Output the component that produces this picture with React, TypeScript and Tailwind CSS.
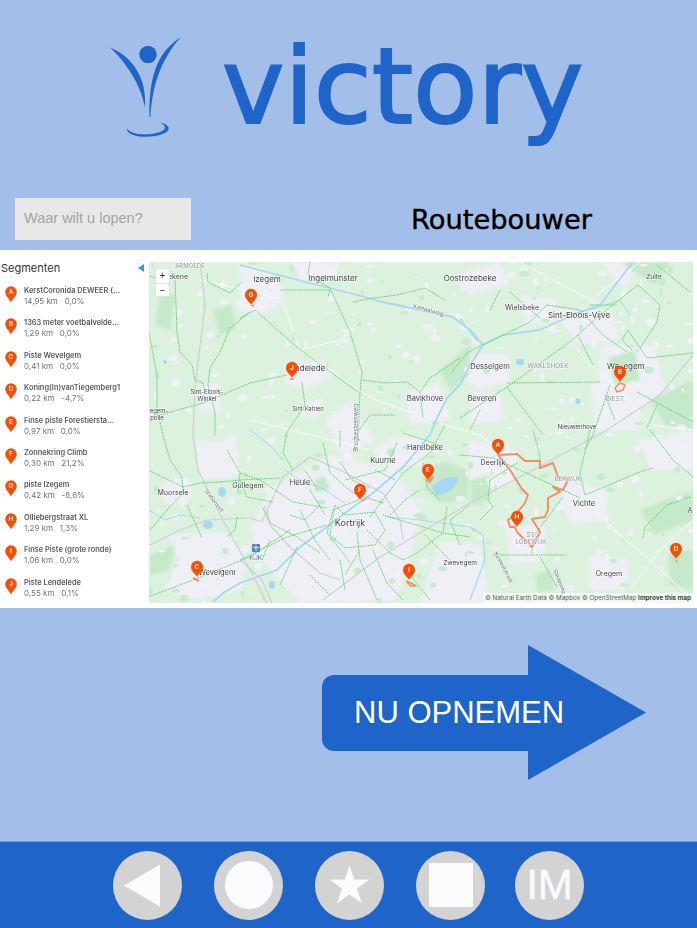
const SEGMENTS = [
  ["A", "KerstCoronida DEWEER (...", "14,95 km", "0,0%"],
  ["B", "1363 meter voetbalvelde...", "1,29 km", "0,0%"],
  ["C", "Piste Wevelgem", "0,41 km", "0,0%"],
  ["D", "Koning(In)vanTiegemberg1", "0,22 km", "-4,7%"],
  ["E", "Finse piste Forestiersta...", "0,97 km", "0,0%"],
  ["F", "Zonnekring Climb", "0,30 km", "21,2%"],
  ["G", "piste Izegem", "0,42 km", "-8,6%"],
  ["H", "Olliebergstraat XL", "1,29 km", "1,3%"],
  ["I", "Finse Piste (grote ronde)", "1,06 km", "0,0%"],
  ["J", "Piste Lendelede", "0,55 km", "0,1%"],
];

const URBAN = [
  "240,265 262,268 285,290 280,305 262,315 240,312",
  "285,362 325,360 330,378 305,388 285,382",
  "305,400 320,402 318,418 302,416",
  "198,385 218,385 222,410 200,412",
  "165,480 190,478 192,500 170,505 160,495",
  "168,535 225,532 248,560 240,590 195,600 165,590 178,560",
  "195,440 235,442 240,475 200,480",
  "270,490 330,455 395,470 420,510 410,560 395,600 300,603 262,560 250,530",
  "325,420 350,400 375,440 340,455",
  "375,445 400,435 430,440 420,465 385,470",
  "405,392 440,385 450,420 410,425",
  "470,355 510,355 510,382 480,390 460,378",
  "470,390 500,395 505,420 470,425",
  "470,440 510,448 515,480 490,490 465,475",
  "520,295 555,300 560,320 525,325",
  "550,308 610,310 620,340 580,345",
  "600,345 655,345 665,395 625,415 598,395",
  "555,480 610,490 605,520 570,525",
  "505,525 545,525 545,560 510,565",
  "590,380 640,400 640,430 595,430",
  "455,275 500,262 510,285 465,295",
  "590,555 630,560 625,590 590,590",
  "440,540 480,545 490,603 420,603",
  "640,440 693,430 693,470 650,470",
  "600,262 640,262 625,290",
  "293,262 340,262 335,278 300,280",
  "210,445 235,435 238,470 212,478",
];

const FOREST = [
  "425,468 445,462 468,470 468,500 440,503 425,490",
  "440,370 470,345 470,375 450,390",
  "213,310 232,305 235,330 220,335",
  "640,510 693,490 693,520 655,535",
  "668,555 693,550 693,590 670,585",
  "608,358 635,350 640,380 615,385",
  "535,575 550,570 555,590 538,592",
  "470,480 490,475 490,500 472,505",
  "160,290 175,295 170,330 155,325",
  "620,262 670,262 655,285",
  "650,400 693,380 693,430 665,425",
  "315,480 325,475 330,490 315,492",
  "150,555 175,545 170,570 150,575",
];

const WATER = [
  { w: 1.8, p: "240,265 290,278 357,295 387,303 453,317 470,330 483,345 503,335 540,330 577,313 600,305 633,262" },
  { w: 1.8, p: "483,345 470,365 460,385 447,398 436,420 430,435 403,467 373,493 353,507 327,527 300,547 277,570 240,583 223,593 213,602" },
  { w: 1.2, p: "387,517 420,520 470,527 483,535 485,560 470,600" },
  { w: 1.2, p: "460,318 470,332 478,342" },
  { w: 1, p: "577,313 600,307 620,300 630,315" },
  { w: 1, p: "285,470 300,480 320,487 345,503" },
  { w: 1, p: "149,510 165,520 180,515 200,518" },
  { w: 1, p: "250,430 270,445 283,460" },
];

const GREY = [
  "200,262 205,305 195,388 193,435 198,470 223,520 250,570 267,603",
  "150,545 180,530 207,520 250,518 262,522",
  "323,600 380,557 470,503 537,468 607,430 660,395 693,355",
  "262,522 267,510 283,477 310,457 340,470 383,493 400,520 403,540",
  "267,510 270,525 290,547 320,573 340,580",
  "240,560 262,580 272,603",
];

const WHITE = [
  "200,280 245,290 282,300 300,350 362,392 380,402 420,415 445,425 480,435 505,455",
  "300,350 340,340 360,320",
  "570,340 590,365 620,390 650,425 693,430",
  "590,505 620,535 650,560 693,600",
  "520,262 590,300 640,262",
  "250,420 330,440 370,450",
  "630,590 660,550 693,520",
];

const GREEN = [
  "148,275 155,278",
  "175,278 177,332 180,352 192,365 195,380 203,383 205,392",
  "207,273 208,282 230,293 242,282",
  "250,312 230,328 220,352 210,368 208,385 215,412 215,435",
  "148,328 157,375 157,412 160,422 163,435 170,460 182,477 183,493",
  "160,415 203,403 250,383 287,375",
  "148,470 183,487 200,483 220,482 240,480 280,478",
  "227,450 240,473 238,493",
  "187,505 202,538",
  "150,530 167,510 183,493",
  "237,517 235,530 227,537",
  "148,597 193,580 250,557 290,530",
  "310,262 308,275 330,288 350,332 362,372 360,392 358,440",
  "280,290 330,290 328,297",
  "240,318 255,310 298,348 358,392",
  "302,382 305,405 287,432 283,453 293,470",
  "353,302 373,298 397,295 425,288 445,300",
  "363,380 383,383 407,382 420,392 423,418",
  "460,358 430,378 420,392",
  "395,415 370,415 352,440",
  "460,418 507,387 570,342 600,315 638,285 660,305 657,322 640,348 647,358 693,353",
  "507,387 543,435",
  "507,383 600,382",
  "547,305 530,322 468,352 452,372",
  "547,305 580,310 603,335 627,352",
  "590,305 617,305",
  "578,335 593,365",
  "657,265 690,292",
  "610,385 593,435 585,450",
  "637,392 693,422",
  "510,292 540,318",
  "500,290 490,310",
  "657,405 647,428",
  "358,500 333,510 327,533 343,553 350,563",
  "357,533 360,560 377,600",
  "370,517 403,473 430,453 445,425",
  "423,463 427,487 440,500",
  "447,507 443,533",
  "383,515 443,533 470,537",
  "367,530 390,553 403,560 417,553 443,533",
  "373,550 387,583 403,600",
  "323,443 330,473 353,493 383,503",
  "340,447 340,430",
  "240,473 260,480 293,502 327,508",
  "240,480 247,497 273,502",
  "263,508 270,523 297,537 320,553",
  "240,560 287,537 327,525",
  "297,547 290,563 280,585",
  "397,443 385,470 345,480",
  "403,433 440,445",
  "460,455 493,458 520,470 580,498",
  "533,430 540,457 540,470",
  "590,430 580,473 585,495 640,472 653,468",
  "650,430 673,460 693,477",
  "490,480 488,500 493,507 480,520",
  "517,463 490,480",
  "563,497 533,537 532,553",
  "493,555 567,555",
  "540,557 557,587",
  "690,497 667,505 645,527 643,538",
  "470,505 450,520 460,545",
  "340,560 345,590",
  "310,575 330,595",
  "300,510 315,540 330,560",
  "410,575 430,600",
  "425,535 450,560",
  "335,505 345,515 375,512 385,530 375,545 345,548 330,535 335,505",
  "320,505 305,520 290,515",
  "340,462 352,480 370,488",
  "305,470 318,490",
  "270,540 262,560",
  "310,490 325,515",
  "390,515 405,500 420,490",
  "360,550 345,575",
  "375,470 395,480",
  "632,350 622,340 628,330 640,348",
  "605,395 615,420",
  "480,410 470,430",
];

const LABELS: [string, number, number, number?, string?, number?][] = [
  ["ARMOEDE", 190, 268, 6, "#8b8f94"],
  ["ekene", 178, 279, 7],
  ["Izegem", 267, 282, 8],
  ["Ingelmunster", 333, 281, 8],
  ["Oostrozebeke", 470, 281, 8],
  ["Zulte", 654, 279, 6.5],
  ["Kanaalweg", 428, 312, 6, "#6b6f74", 16],
  ["Wielsbeke", 522, 310, 7],
  ["Sint-Eloois-Vijve", 579, 318, 8],
  ["Desselgem", 490, 369, 7.5],
  ["WAALSHOEK", 548, 368, 6.5, "#8b8f94"],
  ["Wa", 613, 369, 8],
  ["egem", 634, 369, 8],
  ["BIEST", 615, 401, 6.5, "#8b8f94"],
  ["Beveren", 482, 401, 7.5],
  ["Nieuwenhove", 577, 429, 6],
  ["Bavikhove", 425, 401, 7.5],
  ["ndelede", 310, 371, 8],
  ["Sint-Katrien", 308, 411, 5.5],
  ["Brugsesteenweg", 358, 428, 6, "#6b6f74", -90],
  ["Sint-Eloois-", 207, 394, 6],
  ["Winkel", 207, 401, 6],
  ["egem-", 159, 413, 6],
  ["polle", 157, 420, 6],
  ["Moorsele", 173, 495, 7],
  ["Gullegem", 248, 488, 7],
  ["Heule", 300, 485, 7.5],
  ["Kuurne", 383, 463, 7.5],
  ["Harelbeke", 425, 450, 7.5],
  ["Kortrijk", 350, 526, 9],
  ["Zwevegem", 460, 565, 6.5],
  ["KJK", 256, 560, 6.5, "#3f68b0"],
  ["Wevelgem", 217, 575, 7.5],
  ["Deerlijk", 493, 465, 7],
  ["BEKWIJK", 568, 481, 6, "#8b8f94"],
  ["Vichte", 584, 506, 7.5],
  ["ST.", 531, 537, 6, "#8b8f94"],
  ["LODEWIJK", 531, 544, 6, "#8b8f94"],
  ["Kasteelstraat", 502, 568, 5.5, "#6b6f74", 62],
  ["Stedeweg", 558, 582, 5.5, "#6b6f74", 68],
  ["Stationsstr", 213, 502, 5.5, "#6b6f74", 52],
  ["Oregem", 609, 576, 7],
  ["A", 690, 513, 7],
];

const PINS: [string, number, number][] = [
  ["A", 498, 455],
  ["H", 517, 527],
  ["D", 676, 559],
  ["B", 620, 382],
  ["G", 251, 305],
  ["J", 292, 378],
  ["F", 360, 500],
  ["E", 428, 480],
  ["I", 409, 580],
  ["C", 197, 577],
];

const ROUTES = [
  { w: 1.9, p: "498,455 517,454 525,461 540,461 540,468 553,463 558,477 568,480 563,490 553,487 560,492 548,498 548,510 545,517 532,519 540,532 532,547 517,532 515,527 510,527 508,520 517,513 525,503 528,495 522,489 510,470 498,455" },
  { w: 1.6, p: "615,388 620,383 625,385 623,390 617,392 615,388" },
  { w: 1.6, p: "406,581 411,583 416,586 411,586 406,581" },
  { w: 2, p: "193,578 199,581" },
  { w: 1.6, p: "428,480 433,477 430,482 426,480" },
  { w: 1.2, p: "361,501 367,499" },
  { w: 1.5, p: "251,305 254,306" },
  { w: 1.5, p: "290,379 294,379" },
  { w: 1.6, p: "676,560 677,562" },
];

function speckles(count: number, seedStart: number) {
  const out: { x: number; y: number; rx: number; ry: number }[] = [];
  let s = seedStart;
  const next = () => {
    s = (s * 1103515245 + 12345) & 0x7fffffff;
    return s / 0x7fffffff;
  };
  for (let i = 0; i < count; i++) {
    out.push({ x: 149 + next() * 544, y: 262 + next() * 341, rx: 1 + next() * 4, ry: 1 + next() * 3 });
  }
  return out;
}

const LIGHT_SPOTS = speckles(260, 17);
const DARK_SPOTS = speckles(110, 4242);

function Pin({ letter, x, y }: { letter: string; x: number; y: number }) {
  return (
    <g transform={`translate(${x} ${y})`}>
      <path d="M0 0 C-1.2 -3 -6 -5.4 -6 -10.2 A6 6 0 1 1 6 -10.2 C6 -5.4 1.2 -3 0 0 Z" fill="#fc4c02" />
      <text x="0" y="-7.8" textAnchor="middle" fontSize="6.5" fontWeight="700" fill="#ffe6dc" fontFamily="Inter, sans-serif">
        {letter}
      </text>
    </g>
  );
}

function MapDrawing() {
  return (
    <svg viewBox="149 262 544 341" className="block w-[544px] h-[341px] blur-[0.4px]">
      <defs>
        <filter id="soft" x="-5%" y="-5%" width="110%" height="110%">
          <feGaussianBlur stdDeviation="1.6" />
        </filter>
        <filter id="softer" x="-5%" y="-5%" width="110%" height="110%">
          <feGaussianBlur stdDeviation="0.7" />
        </filter>
      </defs>
      <rect x="149" y="262" width="544" height="341" fill="#dcf1de" />
      <g filter="url(#soft)">
        {URBAN.map((p, i) => (
          <polygon key={i} points={p} fill="#eff0f5" />
        ))}
        {FOREST.map((p, i) => (
          <polygon key={i} points={p} fill="#c6e9cb" />
        ))}
      </g>
      <g filter="url(#softer)">
        {LIGHT_SPOTS.map((d, i) => (
          <ellipse key={i} cx={d.x} cy={d.y} rx={d.rx} ry={d.ry} fill="#f0f2f5" />
        ))}
        {DARK_SPOTS.map((d, i) => (
          <ellipse key={i} cx={d.x} cy={d.y} rx={d.rx} ry={d.ry} fill="#c8eacd" />
        ))}
      </g>
      {WHITE.map((p, i) => (
        <polyline key={i} points={p} fill="none" stroke="#f8faf9" strokeWidth="1" />
      ))}
      {WATER.map((l, i) => (
        <polyline key={i} points={l.p} fill="none" stroke="#a6d8f2" strokeWidth={l.w} />
      ))}
      <path d="M432 488 C437 480 450 475 458 478 C458 487 445 497 436 495 Z" fill="#a6d8f2" />
      <ellipse cx="222" cy="492" rx="4" ry="5" fill="#a6d8f2" />
      <ellipse cx="208" cy="525" rx="5" ry="4" fill="#a6d8f2" />
      <ellipse cx="578" cy="401" rx="2.5" ry="3" fill="#a6d8f2" />
      <ellipse cx="520" cy="362" rx="4" ry="3" fill="#a6d8f2" />
      <ellipse cx="165" cy="362" rx="2" ry="2" fill="#a6d8f2" />
      <ellipse cx="272" cy="585" rx="3" ry="4" fill="#a6d8f2" />
      {GREY.map((p, i) => (
        <polyline key={i} points={p} fill="none" stroke="#ccd0d4" strokeWidth="1.2" />
      ))}
      {GREEN.map((p, i) => (
        <polyline key={i} points={p} fill="none" stroke="#5ccf6c" strokeWidth="1" strokeDasharray="1.5 0.9" />
      ))}
      {ROUTES.map((r, i) => (
        <polyline key={i} points={r.p} fill="none" stroke="#ee8f65" strokeWidth={r.w} strokeLinejoin="round" />
      ))}
      <rect x="252" y="544" width="8" height="8" rx="1" fill="#5b7fc4" />
      <path d="M256 545 V551 M253 547.5 H259" stroke="#ffffff" strokeWidth="0.8" />
      {LABELS.map(([t, x, y, s = 7, c = "#3a3d40", r = 0], i) => (
        <text
          key={i}
          x={x}
          y={y}
          textAnchor="middle"
          fontSize={s}
          fill={c}
          fontFamily="Inter, sans-serif"
          stroke="#ffffff"
          strokeWidth="0.8"
          paintOrder="stroke"
          transform={r ? `rotate(${r} ${x} ${y})` : undefined}
        >
          {t}
        </text>
      ))}
      {PINS.map(([l, x, y]) => (
        <Pin key={l} letter={l} x={x} y={y} />
      ))}
    </svg>
  );
}

function SidePin({ letter }: { letter: string }) {
  return (
    <svg viewBox="-6 -16.5 12 17" className="w-[12px] h-[17px] shrink-0">
      <path d="M0 0 C-1.2 -3.6 -5.8 -6 -5.8 -10.5 A5.8 5.8 0 1 1 5.8 -10.5 C5.8 -6 1.2 -3.6 0 0 Z" fill="#fc4c02" />
      <text x="0" y="-8.4" textAnchor="middle" fontSize="6.5" fontWeight="700" fill="#ffe6dc" fontFamily="Inter, sans-serif">
        {letter}
      </text>
    </svg>
  );
}

function Logo() {
  return (
    <svg viewBox="108 35 76 104" className="w-[76px] h-[104px] shrink-0">
      <circle cx="148" cy="54.5" r="8.7" fill="#1f65c9" />
      <path d="M110 47.5 C131 56 147 76 145 107.5 C141 85 126 62 110 47.5 Z" fill="#1f65c9" />
      <path d="M181 37 C161 50 148.5 70 149.5 117 L150.5 117 C152 88 160 60 181 37 Z" fill="#1f65c9" />
      <path d="M160 122.5 C172 125 173 133 155 136 C140 138.5 126 135 127 128 C128.5 133 140 135.5 152 134 C165 132 169 127 160 122.5 Z" fill="#1f65c9" />
    </svg>
  );
}

export default function App() {
  return (
    <div className="w-[697px] h-[928px] overflow-hidden bg-[#a3bfe9] flex flex-col font-['Liberation_Sans',sans-serif]">
      <header className="h-[190px] shrink-0 flex items-start pl-[108px] pt-[35px]">
        <Logo />
        <span className="ml-[38px] -mt-[28px] text-[105.5px] leading-[160px] text-[#1f65c9] font-['DejaVu_Sans',sans-serif] whitespace-nowrap [-webkit-text-stroke:2px_#1f65c9]">
          victory
        </span>
      </header>

      <div className="h-[60px] shrink-0 flex items-start pl-[15px] pt-[8px]">
        <div className="w-[176px] h-[42px] bg-[#e8e8e8] flex items-center pl-[9px] text-[14.5px] text-[#a3a3a3]">
          Waar wilt u lopen?
        </div>
        <h1 className="ml-[220px] text-[27.3px] leading-[44px] font-normal text-black font-['DejaVu_Sans',sans-serif] whitespace-nowrap [-webkit-text-stroke:0.4px_#000000]">
          Routebouwer
        </h1>
      </div>

      <section className="h-[358px] shrink-0 bg-white flex font-['Inter',sans-serif]">
        <aside className="w-[149px] shrink-0 relative">
          <div className="pl-[1px] pt-[11px] text-[11px] leading-[14px] text-[#333333]">Segmenten</div>
          <div className="absolute left-[138px] top-[14px] w-0 h-0 border-y-[4px] border-y-transparent border-r-[6px] border-r-[#2a9fd6]" />
          <ul className="pt-[10px] blur-[0.4px]">
            {SEGMENTS.map(([l, name, km, pct]) => (
              <li key={l} className="h-[32.4px] flex items-start pl-[5px]">
                <div className="pt-[1px] w-[19px]">
                  <SidePin letter={l} />
                </div>
                <div className="flex flex-col">
                  <span className="text-[7.4px] leading-[11px] font-semibold text-[#555b62] whitespace-nowrap">{name}</span>
                  <span className="text-[8px] leading-[11px] text-[#6f7479] whitespace-pre">
                    {km}
                    {"   "}
                    {pct}
                  </span>
                </div>
              </li>
            ))}
          </ul>
        </aside>

        <div className="relative mt-[12px] w-[544px] h-[341px] shrink-0 overflow-hidden">
          <MapDrawing />
          <div className="absolute left-[6px] top-[6px] w-[15px] h-[29px] bg-white border border-[#dfe3e6] rounded-[2px] flex flex-col items-center text-[10px] leading-[14px] text-[#333333] font-['Liberation_Sans',sans-serif]">
            <span>+</span>
            <span className="border-t border-[#e3e3e3] w-full text-center">−</span>
          </div>
          <div className="absolute right-0 bottom-0 w-[210px] h-[10px] bg-white/60 flex items-center justify-end pr-[2px] text-[6.3px] leading-[10px] text-[#555b62] whitespace-nowrap">
            <span>© Natural Earth Data © Mapbox © OpenStreetMap&nbsp;</span>
            <span className="font-bold text-[#444444]">Improve this map</span>
          </div>
        </div>
      </section>

      <main className="flex-1 flex items-start pl-[322px] pt-[37px]">
        <div className="flex items-center h-[135px]">
          <div className="w-[207px] h-[76px] bg-[#1f65c9] rounded-l-[12px] flex items-center pl-[32px] pt-[1px]">
            <span className="relative z-10 text-[31px] text-white whitespace-nowrap">NU OPNEMEN</span>
          </div>
          <svg viewBox="0 0 118 135" className="w-[118px] h-[135px] -ml-px shrink-0">
            <polygon points="0,0 118,67.5 0,135" fill="#1f65c9" />
          </svg>
        </div>
      </main>

      <footer className="h-[87px] shrink-0 bg-[#1f65c9] border-t border-[#6f9be0] flex items-center pl-[113px] gap-[32px]">
        <div className="w-[69px] h-[69px] rounded-full bg-[#d3d3d3] flex items-center justify-center">
          <svg viewBox="0 0 69 69" className="w-[69px] h-[69px]">
            <polygon points="47,13.5 47,55.5 11,34.5" fill="#f9fbfd" />
          </svg>
        </div>
        <div className="w-[69px] h-[69px] rounded-full bg-[#d3d3d3] flex items-center justify-center">
          <div className="w-[48px] h-[48px] rounded-full bg-[#f9fbfd]" />
        </div>
        <div className="w-[69px] h-[69px] rounded-full bg-[#d3d3d3] flex items-center justify-center">
          <svg viewBox="0 0 69 69" className="w-[69px] h-[69px]">
            <polygon points="34.5,14 39.2,28.6 54.5,28.6 42.1,37.6 46.8,52.2 34.5,43.2 22.2,52.2 26.9,37.6 14.5,28.6 29.8,28.6" fill="#f9fbfd" />
          </svg>
        </div>
        <div className="w-[69px] h-[69px] rounded-full bg-[#d3d3d3] flex items-center justify-center">
          <div className="w-[44px] h-[44px] bg-[#f9fbfd]" />
        </div>
        <div className="w-[69px] h-[69px] -ml-[2px] rounded-full bg-[#d3d3d3] flex items-center justify-center text-[42px] leading-none text-[#f9fbfd] [-webkit-text-stroke:0.5px_#f9fbfd]">
          IM
        </div>
      </footer>
    </div>
  );
}
